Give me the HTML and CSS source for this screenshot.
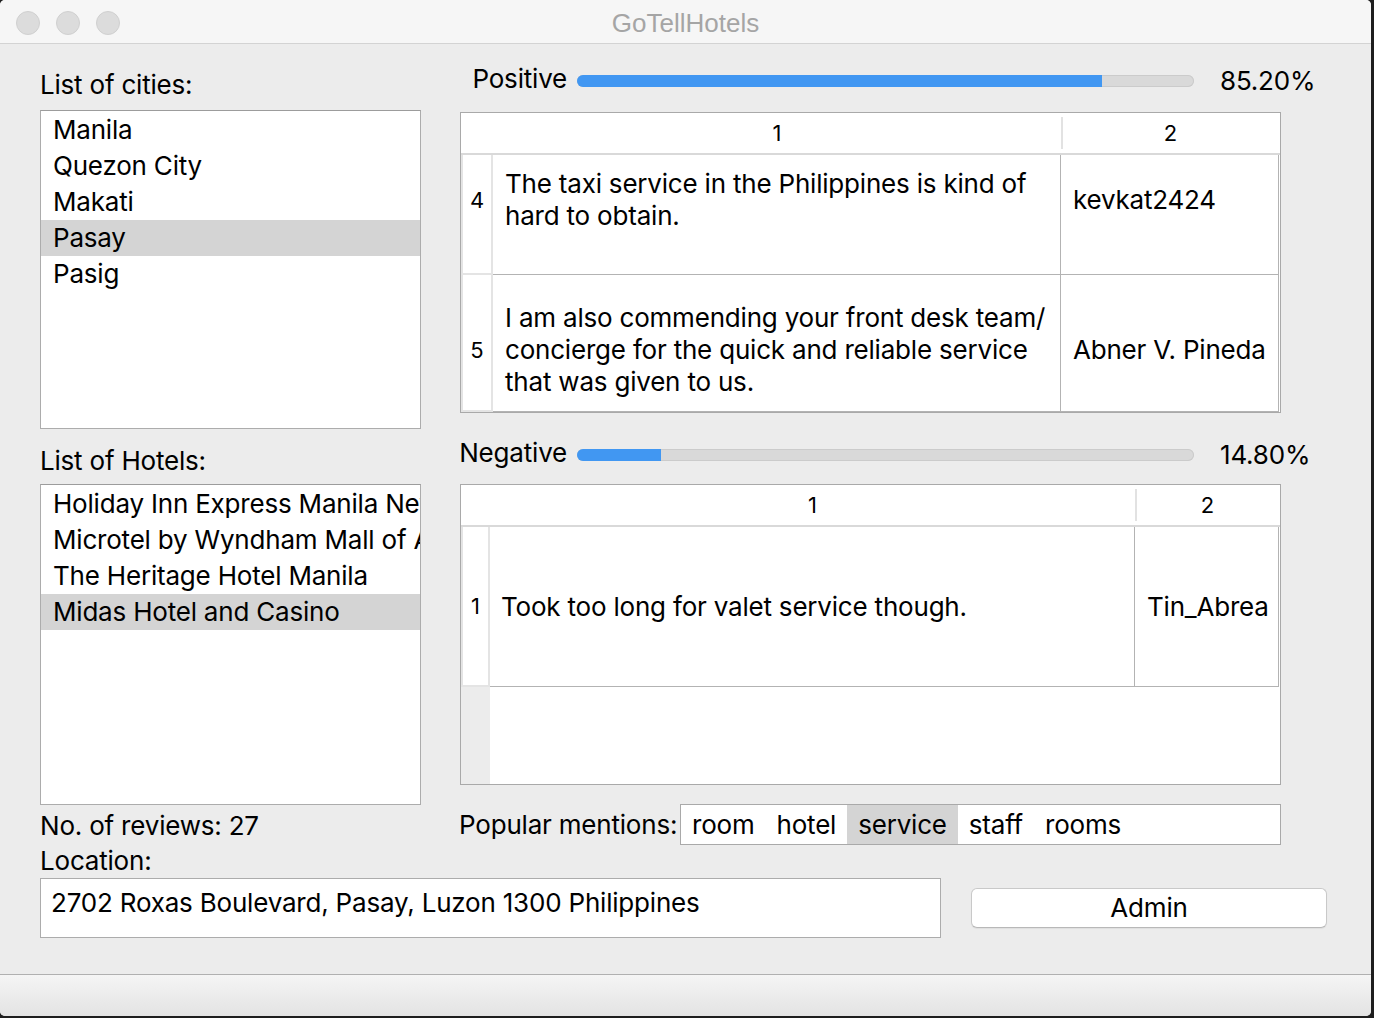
FILE: index.html
```html
<!DOCTYPE html>
<html>
<head>
<meta charset="utf-8">
<title>GoTellHotels</title>
<link rel="stylesheet" href="styles.css">
</head>
<body>
<div class="window">
  <header class="titlebar">
    <div class="lights"><span class="light"></span><span class="light"></span><span class="light"></span></div>
    <div class="title">GoTellHotels</div>
    <div></div>
  </header>
  <main class="content">
    <div class="upper">
      <section class="left">
        <div class="label label-cities">List of cities:</div>
        <ul class="list list-cities">
          <li>Manila</li>
          <li>Quezon City</li>
          <li>Makati</li>
          <li class="sel">Pasay</li>
          <li>Pasig</li>
        </ul>
        <div class="label label-hotels">List of Hotels:</div>
        <ul class="list list-hotels">
          <li>Holiday Inn Express Manila Newport City</li>
          <li>Microtel by Wyndham Mall of Asia</li>
          <li>The Heritage Hotel Manila</li>
          <li class="sel">Midas Hotel and Casino</li>
        </ul>
        <div class="stat stat-reviews">No. of reviews: 27</div>
        <div class="stat">Location:</div>
      </section>
      <section class="right">
        <div class="ratio ratio-pos">
          <div class="ratio-label">Positive</div>
          <div class="bar"><div class="fill" style="width:85.1%"></div></div>
          <div class="ratio-value">85.20%</div>
        </div>
        <div class="tbl tbl-pos">
          <div class="thead">
            <div class="th"></div>
            <div class="th">1</div>
            <div class="th sep">2</div>
          </div>
          <div class="tr row-a">
            <div class="vh">4</div>
            <div class="td">The taxi service in the Philippines is kind of<br>hard to obtain.</div>
            <div class="td">kevkat2424</div>
          </div>
          <div class="tr row-b">
            <div class="vh">5</div>
            <div class="td">I am also commending your front desk team/<br>concierge for the quick and reliable service<br>that was given to us.</div>
            <div class="td">Abner V. Pineda</div>
          </div>
        </div>
        <div class="ratio ratio-neg">
          <div class="ratio-label">Negative</div>
          <div class="bar"><div class="fill" style="width:13.6%"></div></div>
          <div class="ratio-value">14.80%</div>
        </div>
        <div class="tbl tbl-neg">
          <div class="thead">
            <div class="th"></div>
            <div class="th">1</div>
            <div class="th sep">2</div>
          </div>
          <div class="tr row-c">
            <div class="vh">1</div>
            <div class="td td-narrow">Took too long for valet service though.</div>
            <div class="td">Tin_Abrea</div>
          </div>
          <div class="tr row-empty">
            <div class="vh-blank"></div>
            <div class="blank"></div>
            <div class="blank"></div>
          </div>
        </div>
        <div class="mentions">
          <div class="mentions-label">Popular mentions:</div>
          <ul class="chips">
            <li>room</li>
            <li>hotel</li>
            <li class="sel">service</li>
            <li>staff</li>
            <li>rooms</li>
          </ul>
        </div>
      </section>
    </div>
    <div class="lower">
      <div class="location">2702 Roxas Boulevard, Pasay, Luzon 1300 Philippines</div>
      <button class="admin" type="button">Admin</button>
    </div>
  </main>
  <footer class="statusbar"></footer>
</div>
</body>
</html>
```

FILE: styles.css
```css
* { box-sizing: border-box; }
html, body { margin: 0; padding: 0; }
body {
  width: 1374px;
  height: 1018px;
  overflow: hidden;
  background: #1e1e1e;
  font-family: Inter, "Liberation Sans", sans-serif;
  font-size: 26px;
  letter-spacing: -0.2px;
  color: #000;
}
.window {
  width: 1371px;
  height: 1016px;
  background: #ececec;
  display: flex;
  flex-direction: column;
  border-radius: 5px;
  overflow: hidden;
}

/* title bar */
.titlebar {
  flex: none;
  height: 44px;
  background: #f6f6f6;
  border-bottom: 1px solid #d3d3d3;
  display: grid;
  grid-template-columns: 1fr auto 1fr;
  align-items: center;
}
.lights { display: flex; gap: 16px; padding-left: 16px; padding-top: 1px; }
.light {
  width: 24px;
  height: 24px;
  border-radius: 50%;
  background: #dcdcdc;
  border: 1px solid #d0d0d0;
}
.title {
  font-family: "Liberation Sans", Arial, sans-serif;
  font-size: 26px;
  letter-spacing: 0;
  color: #a5a5a5;
  line-height: 43px;
  padding-top: 2px;
}

/* content */
.content { flex: 1; display: flex; flex-direction: column; padding-left: 40px; }
.upper { display: flex; align-items: flex-start; }
.left { width: 381px; flex: none; display: flex; flex-direction: column; }
.right { margin-left: 38px; width: 880px; flex: none; display: flex; flex-direction: column; }

.label { height: 36px; line-height: 36px; white-space: nowrap; }
.label-cities { margin-top: 23px; }
.label-hotels { margin-top: 14px; }

.list {
  list-style: none;
  margin: 0;
  padding: 1px 0 0;
  background: #fff;
  border: 1px solid #acacac;
  border-top-color: #9c9c9c;
  overflow: hidden;
}
.list li {
  height: 36px;
  line-height: 36px;
  padding-left: 12px;
  white-space: nowrap;
  overflow: hidden;
}
.list li.sel { background: #d4d4d4; }
.list-cities { margin-top: 7px; height: 319px; }
.list-hotels { margin-top: 5px; height: 321px; }

.stat { height: 35px; line-height: 35px; white-space: nowrap; }
.stat-reviews { margin-top: 3px; }

/* ratio rows */
.ratio { display: flex; align-items: center; height: 36px; }
.ratio-pos { margin-top: 19px; }
.ratio-neg { margin-top: 24px; }
.ratio-label { width: 108px; text-align: right; line-height: 36px; padding-bottom: 5px; white-space: nowrap; }
.bar {
  width: 617px;
  height: 12px;
  margin-left: 10px;
  border-radius: 6px;
  background: #d9d9d9;
  box-shadow: inset 0 0 0 1px #cbcbcb;
  overflow: hidden;
}
.fill { height: 100%; background: #4197f2; }
.ratio-value { margin-left: 26px; line-height: 36px; }

/* tables */
.tbl {
  width: 821px;
  height: 301px;
  margin-left: 1px;
  border: 1px solid #a9a9a9;
  background: #fff;
  display: flex;
  flex-direction: column;
  overflow: hidden;
}
.tbl-pos { margin-top: 13px; --cols: 32px 568px 218px; --hcols: 32px 568px 219px; }
.tbl-neg { margin-top: 11px; --cols: 29px 645px 144px; --hcols: 29px 645px 145px; }
.thead {
  flex: none;
  display: grid;
  grid-template-columns: var(--hcols);
  height: 42px;
  border-bottom: 2px solid #d9d9d9;
}
.th {
  font-size: 22px;
  letter-spacing: 0;
  display: flex;
  align-items: center;
  justify-content: center;
}
.th.sep {
  background: linear-gradient(#e2e2e2, #e2e2e2) left center / 2px 32px no-repeat;
}
.tr { flex: none; display: grid; grid-template-columns: var(--cols); }
.vh {
  font-size: 22px;
  letter-spacing: 0;
  display: flex;
  align-items: center;
  justify-content: center;
  border-left: 2px solid #e4e4e4;
  border-right: 2px solid #e4e4e4;
  border-bottom: 2px solid #e4e4e4;
}
.td {
  display: flex;
  align-items: center;
  padding: 0 10px 0 12px;
  line-height: 32px;
  white-space: nowrap;
  overflow: hidden;
  border-right: 1px solid #b3b3b3;
  border-bottom: 1px solid #b3b3b3;
}
.td-narrow { padding-left: 11px; }
.row-a { height: 120px; }
.row-a .vh, .row-a .td { padding-bottom: 29px; }
.row-b { height: 137px; }
.row-b .vh, .row-b .td { padding-top: 14px; }
.row-c { height: 160px; }
.row-empty { height: 97px; }
.vh-blank { background: #ececec; }
.blank { background: #fff; }

/* popular mentions */
.mentions { margin-top: 19px; display: flex; align-items: center; height: 41px; }
.mentions-label { width: 221px; flex: none; line-height: 36px; white-space: nowrap; }
.chips {
  list-style: none;
  margin: 0;
  padding: 0;
  display: flex;
  width: 601px;
  height: 41px;
  border: 1px solid #a9a9a9;
  background: #fff;
}
.chips li { padding: 0 11px; line-height: 39px; white-space: nowrap; }
.chips li.sel { background: #d4d4d4; }

/* bottom row */
.lower { display: flex; align-items: center; height: 60px; }
.location {
  width: 901px;
  height: 60px;
  border: 1px solid #acacac;
  background: #fff;
  padding: 6px 0 0 10px;
  line-height: 36px;
  white-space: nowrap;
}
.admin {
  margin-left: 30px;
  width: 356px;
  height: 40px;
  padding: 0;
  background: #fff;
  border: 1px solid #c9c9c9;
  border-bottom-color: #b8b8b8;
  border-radius: 6px;
  font-family: Inter, "Liberation Sans", sans-serif;
  font-size: 26px;
  letter-spacing: -0.2px;
  line-height: 36px;
  color: #000;
  box-shadow: 0 1px 1px rgba(0, 0, 0, 0.06);
}

.statusbar {
  flex: none;
  height: 42px;
  border-top: 1px solid #b0b0b0;
  background: linear-gradient(#f5f5f5, #e3e3e3);
}
```
